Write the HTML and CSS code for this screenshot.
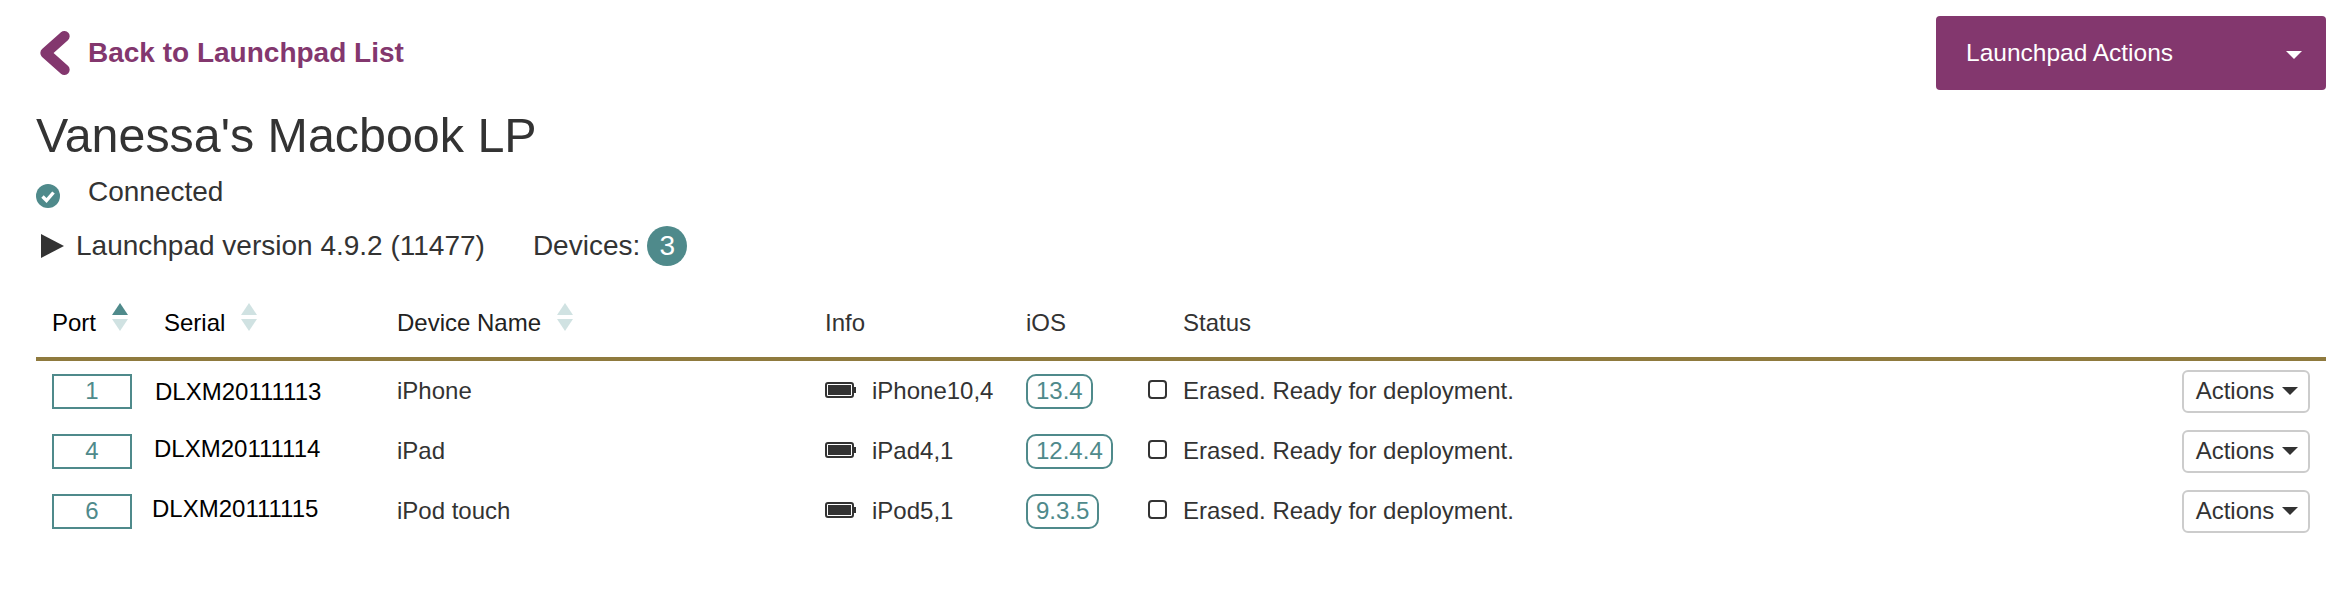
FILE: index.html
```html
<!DOCTYPE html>
<html lang="en">
<head>
<meta charset="utf-8">
<title>Vanessa's Macbook LP</title>
<link rel="stylesheet" href="styles.css">
</head>
<body>
<main class="page">
  <header class="top">
    <a class="back" href="#">
      <svg class="back-icon" viewBox="0 0 28 42"><polyline points="23,5 5,21 23,37" /></svg>
      <span>Back to Launchpad List</span>
    </a>
    <button class="primary"><span>Launchpad Actions</span><i class="caret caret-light"></i></button>
  </header>
  <h1 class="title">Vanessa's Macbook LP</h1>
  <div class="conn">
    <svg class="conn-icon" viewBox="0 0 24 24"><circle cx="12" cy="12" r="12"/><polyline points="6.5,12.5 10.5,16.5 17.5,8.5"/></svg>
    <span>Connected</span>
  </div>
  <div class="ver">
    <svg class="ver-icon" viewBox="0 0 23 24"><polygon points="0,0 23,12 0,24"/></svg>
    <span class="ver-text">Launchpad version 4.9.2 (11477)</span>
    <span class="dev-label">Devices:</span>
    <span class="count">3</span>
  </div>
  <section class="table">
    <div class="cols head">
      <div class="th">Port<span class="sort"><i class="up on"></i><i class="down"></i></span></div>
      <div class="th">Serial<span class="sort"><i class="up"></i><i class="down"></i></span></div>
      <div class="th">Device Name<span class="sort"><i class="up"></i><i class="down"></i></span></div>
      <div class="th">Info</div>
      <div class="th">iOS</div>
      <div></div>
      <div class="th">Status</div>
      <div></div>
    </div>
    <div class="cols row">
      <div><span class="port">1</span></div>
      <div class="serial s1">DLXM20111113</div>
      <div>iPhone</div>
      <div class="info"><svg class="batt" viewBox="0 0 31 16"><rect x="1" y="1" width="27" height="14" rx="2"/><rect class="lvl" x="3" y="3" width="23" height="10"/><rect class="lvl" x="29" y="5" width="2" height="6"/></svg><span>iPhone10,4</span></div>
      <div><span class="pill">13.4</span></div>
      <div><span class="check"></span></div>
      <div>Erased. Ready for deployment.</div>
      <button class="act">Actions<i class="caret"></i></button>
    </div>
    <div class="cols row">
      <div><span class="port">4</span></div>
      <div class="serial s2">DLXM20111114</div>
      <div>iPad</div>
      <div class="info"><svg class="batt" viewBox="0 0 31 16"><rect x="1" y="1" width="27" height="14" rx="2"/><rect class="lvl" x="3" y="3" width="23" height="10"/><rect class="lvl" x="29" y="5" width="2" height="6"/></svg><span>iPad4,1</span></div>
      <div><span class="pill">12.4.4</span></div>
      <div><span class="check"></span></div>
      <div>Erased. Ready for deployment.</div>
      <button class="act">Actions<i class="caret"></i></button>
    </div>
    <div class="cols row">
      <div><span class="port">6</span></div>
      <div class="serial s3">DLXM20111115</div>
      <div>iPod touch</div>
      <div class="info"><svg class="batt" viewBox="0 0 31 16"><rect x="1" y="1" width="27" height="14" rx="2"/><rect class="lvl" x="3" y="3" width="23" height="10"/><rect class="lvl" x="29" y="5" width="2" height="6"/></svg><span>iPod5,1</span></div>
      <div><span class="pill">9.3.5</span></div>
      <div><span class="check"></span></div>
      <div>Erased. Ready for deployment.</div>
      <button class="act">Actions<i class="caret"></i></button>
    </div>
  </section>
</main>
</body>
</html>
```

FILE: styles.css
```css
* { box-sizing: border-box; }
html, body { margin: 0; background: #fff; }
body { font-family: "Liberation Sans", Arial, sans-serif; color: #333; }
.page { padding: 16px 10px 0 36px; }

.top { display: flex; justify-content: space-between; align-items: flex-start; height: 89px; }
.back { display: flex; align-items: center; gap: 18px; margin: 15px 0 0 4px; color: #83376e; font-size: 28px; font-weight: 700; text-decoration: none; line-height: 44px; }
.back-icon { width: 30px; height: 44px; display: block; }
.back-icon polyline { fill: none; stroke: #83376e; stroke-width: 10; stroke-linejoin: round; stroke-linecap: round; }
.primary { display: flex; justify-content: space-between; align-items: center; width: 390px; height: 74px; padding: 0 24px 0 30px; background: #83376e; border: 0; border-radius: 4px; color: #fff; font: 24.5px "Liberation Sans", Arial, sans-serif; }

.caret { display: inline-block; width: 0; height: 0; border-style: solid; border-width: 8px 8px 0; border-color: #333 transparent transparent; margin-left: 8px; }
.caret-light { border-top-color: #fff; margin-top: 4px; }

.title { margin: 0; font-size: 48.4px; font-weight: 400; line-height: 60px; height: 69px; }

.conn { display: flex; align-items: flex-start; gap: 28px; font-size: 28px; line-height: 36px; height: 52px; }
.conn-icon { width: 24px; height: 24px; margin-top: 10px; }
.conn-icon circle { fill: #4f8a8b; }
.conn-icon polyline { fill: none; stroke: #fff; stroke-width: 3.4; }

.ver { display: flex; align-items: center; height: 40px; font-size: 28px; }
.ver-icon { width: 23px; height: 24px; margin-left: 5px; fill: #333; }
.ver-text { margin-left: 12px; }
.dev-label { margin-left: 48px; }
.count { display: flex; align-items: center; justify-content: center; width: 40px; height: 40px; margin-left: 7px; border-radius: 50%; background: #4f8a8b; color: #fff; }

.table { margin-top: 37px; font-size: 24px; }
.cols { display: grid; grid-template-columns: 112px 233px 428px 201px 122px 35px 1fr auto; padding: 0 16px; align-items: center; }
.head { height: 58px; align-items: start; border-bottom: 4px solid #8f7a3e; }
.th { display: flex; align-items: flex-start; line-height: 28px; padding-top: 6px; }
.head .th:nth-child(-n+3) { color: #000; }
.head .th:nth-child(3) { color: #222; }
.sort { display: flex; flex-direction: column; gap: 4px; margin: -6px 0 0 16px; }
.sort i { width: 0; height: 0; border-style: solid; border-color: transparent; }
.up { border-width: 0 8px 12px; border-bottom-color: #d0e2e2 !important; }
.up.on { border-bottom-color: #4f8a8b !important; }
.down { border-width: 12px 8px 0; border-top-color: #d0e2e2 !important; }

.row { height: 60px; }
.port { display: flex; align-items: center; justify-content: center; width: 80px; height: 35px; border: 2px solid #4f8a8b; color: #4f8a8b; }
.serial { color: #000; }
.s1 { margin: 1px 0 0 -9px; }
.s2 { margin: -5px 0 0 -10px; }
.s3 { margin: -5px 0 0 -12px; }
.info { display: flex; align-items: center; gap: 16px; }
.batt { width: 31px; height: 16px; margin-top: -2px; }
.batt rect { fill: none; stroke: #333; stroke-width: 2; }
.batt rect.lvl { fill: #333; stroke: none; }
.pill { display: inline-flex; align-items: center; height: 35px; padding: 0 8px; border: 2px solid #4f8a8b; border-radius: 10px; color: #4f8a8b; }
.check { display: block; width: 19px; height: 19px; margin-top: -4px; border: 2px solid #333; border-radius: 4px; }
.act { display: flex; align-items: center; justify-content: center; width: 128px; height: 43px; padding: 0 0 0 2px; background: #fff; border: 2px solid #ccc; border-radius: 6px; color: #333; font: 24px "Liberation Sans", Arial, sans-serif; }
```
